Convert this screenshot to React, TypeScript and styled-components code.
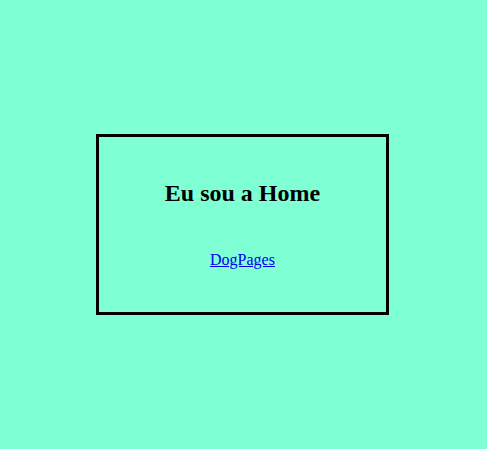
import React from "react";
import styled, { createGlobalStyle } from "styled-components";

const Global = createGlobalStyle`
  html, body {
    margin: 0;
    padding: 0;
    background: #7fffd4;
    font-family: "Liberation Serif", "Times New Roman", serif;
  }
`;

const Page = styled.main`
  min-height: 100vh;
  display: flex;
  align-items: center;
  justify-content: center;
  padding-right: 2px;
  box-sizing: border-box;
`;

const Card = styled.section`
  box-sizing: border-box;
  width: 293px;
  height: 181px;
  border: 3px solid #000;
  display: flex;
  flex-direction: column;
  align-items: center;
  padding-top: 23px;
`;

const Title = styled.h2`
  font-size: 24px;
  font-weight: bold;
  margin: 20px 0 0;
  color: #000;
`;

const NavLink = styled.a`
  margin-top: 44px;
  font-size: 16px;
  color: #0000ee;
  text-decoration: underline;
`;

export default function App() {
  return (
    <>
      <Global />
      <Page>
        <Card>
          <Title>Eu sou a Home</Title>
          <NavLink href="#">DogPages</NavLink>
        </Card>
      </Page>
    </>
  );
}
